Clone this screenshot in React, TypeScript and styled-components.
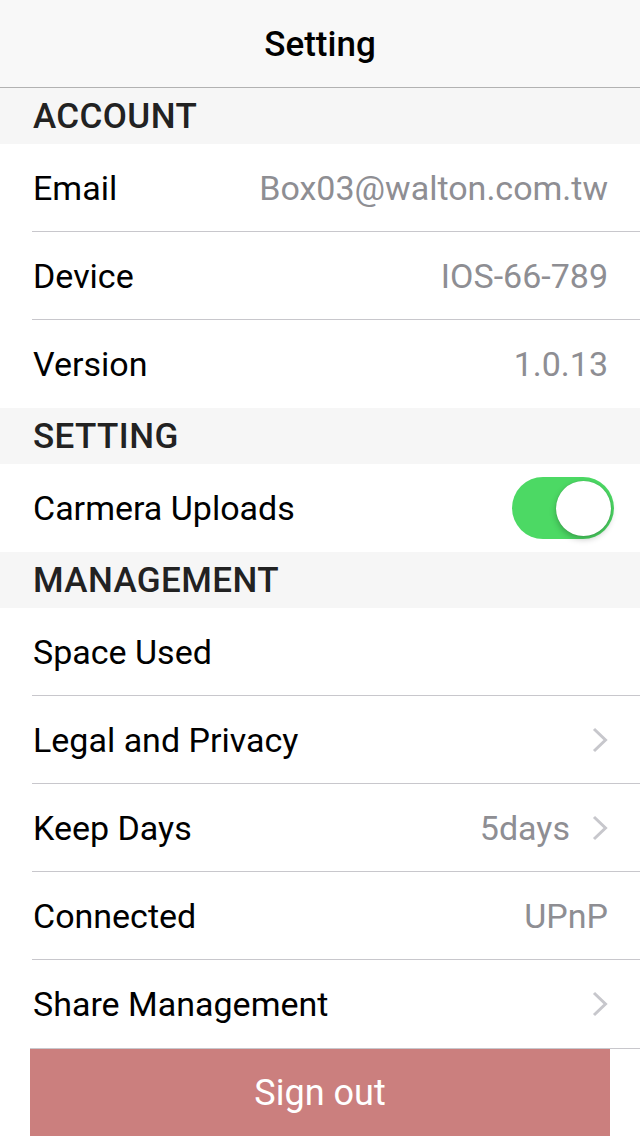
import React from "react";
import styled, { createGlobalStyle } from "styled-components";

const Global = createGlobalStyle`
  html, body { margin: 0; padding: 0; background: #ffffff; }
  body { font-family: Roboto, "Noto Sans", sans-serif; -webkit-font-smoothing: antialiased; }
  * { box-sizing: border-box; }
`;

const Page = styled.div`
  width: 640px;
  height: 1136px;
  display: flex;
  flex-direction: column;
  background: #ffffff;
  overflow: hidden;
`;

const NavBar = styled.header`
  height: 88px;
  flex: 0 0 88px;
  display: flex;
  align-items: center;
  justify-content: center;
  background: #f8f8f8;
  border-bottom: 1px solid #b2b2b2;
  font-size: 35px;
  font-weight: 500;
  color: #000;
  padding-top: 1px;
`;

const SectionHeader = styled.div`
  height: 56px;
  flex: 0 0 56px;
  display: flex;
  align-items: center;
  padding-left: 33px;
  background: #f6f6f6;
  font-size: 35px;
  font-weight: 500;
  letter-spacing: 0.4px;
  color: #222;
`;

const Row = styled.div`
  height: 88px;
  flex: 0 0 88px;
  display: flex;
  align-items: center;
  padding-left: 32px;
  background: #fff;
`;

const RowInner = styled.div<{ $sep: boolean }>`
  flex: 1;
  height: 100%;
  display: flex;
  align-items: center;
  padding-right: 32px;
  padding-left: 1px;
  padding-top: ${(p) => (p.$sep ? "1px" : "0")};
  border-bottom: ${(p) => (p.$sep ? "1px solid #c8c7cc" : "none")};
`;

const Label = styled.span`
  flex: 1;
  font-size: 34px;
  color: #000;
`;

const Value = styled.span`
  font-size: 34px;
  color: #8e8e93;
`;

const Chevron = styled.svg`
  margin-left: 22px;
  width: 16px;
  height: 26px;
  flex: 0 0 auto;
`;

const SwitchTrack = styled.div`
  position: relative;
  width: 102px;
  height: 62px;
  border-radius: 31px;
  background: #4cd964;
  margin-right: -6px;
`;

const SwitchKnob = styled.div`
  position: absolute;
  top: 4px;
  right: 3px;
  width: 55px;
  height: 55px;
  border-radius: 50%;
  background: #fff;
  box-shadow: 0 3px 6px rgba(0, 0, 0, 0.25), 0 0 1px rgba(0, 0, 0, 0.2);
`;

const Footer = styled.div`
  flex: 1;
  border-top: 1px solid #c8c7cc;
  margin-left: 30px;
  display: flex;
`;

const SignOut = styled.button`
  width: 580px;
  height: 100%;
  border: none;
  background: #cb7f7e;
  color: #fff;
  font-family: Roboto, "Noto Sans", sans-serif;
  font-size: 36px;
  padding: 0;
`;

const ChevronIcon = () => (
  <Chevron viewBox="0 0 16 26">
    <path d="M2 2 L13.5 13 L2 24" fill="none" stroke="#c7c7cc" strokeWidth="3" />
  </Chevron>
);

type Item = { label: string; value?: string; chevron?: boolean; toggle?: boolean };

const Section = ({ title, items }: { title: string; items: Item[] }) => (
  <>
    <SectionHeader>{title}</SectionHeader>
    {items.map((it, i) => (
      <Row key={it.label}>
        <RowInner $sep={i < items.length - 1}>
          <Label>{it.label}</Label>
          {it.value && <Value>{it.value}</Value>}
          {it.chevron && <ChevronIcon />}
          {it.toggle && (
            <SwitchTrack>
              <SwitchKnob />
            </SwitchTrack>
          )}
        </RowInner>
      </Row>
    ))}
  </>
);

export default function App() {
  return (
    <Page>
      <Global />
      <NavBar>Setting</NavBar>
      <Section
        title="ACCOUNT"
        items={[
          { label: "Email", value: "Box03@walton.com.tw" },
          { label: "Device", value: "IOS-66-789" },
          { label: "Version", value: "1.0.13" },
        ]}
      />
      <Section title="SETTING" items={[{ label: "Carmera Uploads", toggle: true }]} />
      <Section
        title="MANAGEMENT"
        items={[
          { label: "Space Used" },
          { label: "Legal and Privacy", chevron: true },
          { label: "Keep Days", value: "5days", chevron: true },
          { label: "Connected", value: "UPnP" },
          { label: "Share Management", chevron: true },
        ]}
      />
      <Footer>
        <SignOut>Sign out</SignOut>
      </Footer>
    </Page>
  );
}
